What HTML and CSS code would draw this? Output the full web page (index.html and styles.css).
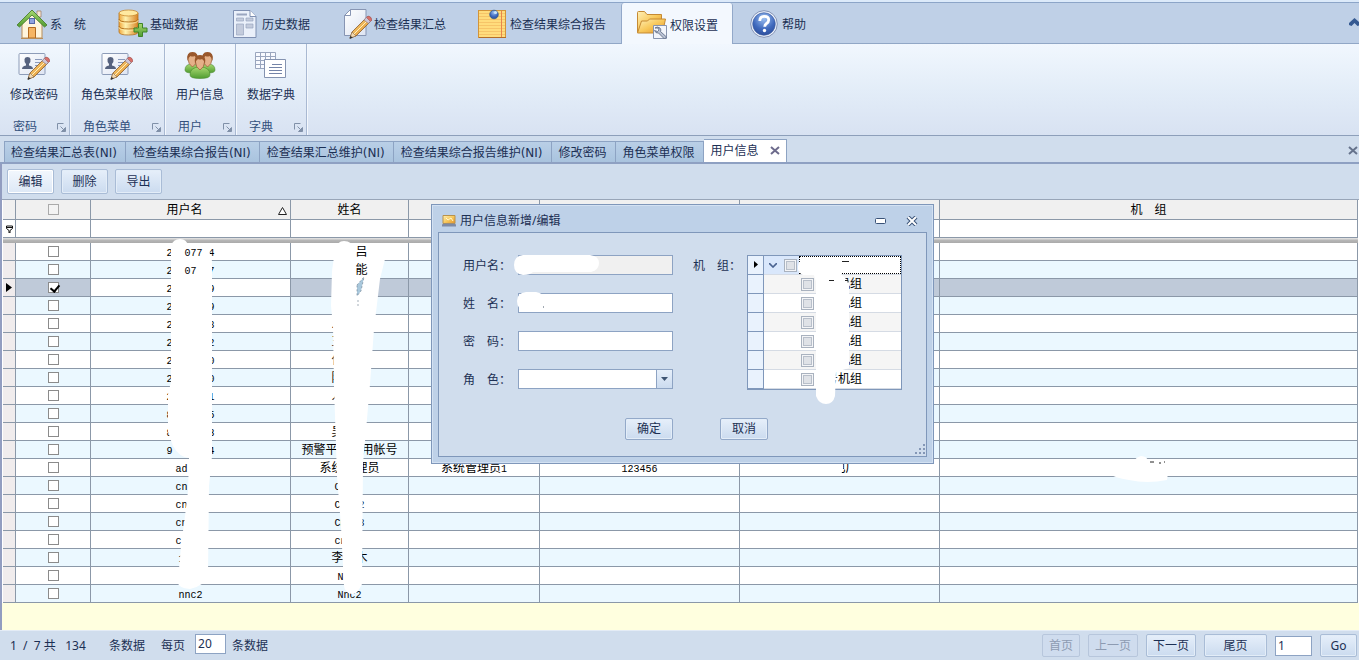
FILE: index.html
```html
<!DOCTYPE html>
<html lang="zh-CN">
<head>
<meta charset="utf-8">
<title>用户信息</title>
<link rel="stylesheet" href="styles.css">
</head>
<body>
<svg class="defs" width="0" height="0" aria-hidden="true">
  <defs>
    <linearGradient id="gold" x1="0" y1="0" x2="1" y2="1"><stop offset="0" stop-color="#fff0b8"/><stop offset=".5" stop-color="#f8c95c"/><stop offset="1" stop-color="#e2922a"/></linearGradient>
    <linearGradient id="cyl" x1="0" x2="1"><stop offset="0" stop-color="#f0a63c"/><stop offset=".35" stop-color="#fff3b0"/><stop offset="1" stop-color="#d98325"/></linearGradient>
    <linearGradient id="wood" x1="0" y1="0" x2="1" y2="1"><stop offset="0" stop-color="#ffdf8c"/><stop offset="1" stop-color="#d9851f"/></linearGradient>
    <radialGradient id="ball" cx=".5" cy=".25" r=".8"><stop offset="0" stop-color="#9cc0f2"/><stop offset=".6" stop-color="#3f69bd"/><stop offset="1" stop-color="#2a4a96"/></radialGradient>
    <linearGradient id="green" x1="0" y1="0" x2="0" y2="1"><stop offset="0" stop-color="#a8d870"/><stop offset="1" stop-color="#4f9c30"/></linearGradient>
    <linearGradient id="paper" x1="0" y1="0" x2="1" y2="1"><stop offset="0" stop-color="#ffffff"/><stop offset="1" stop-color="#dde4f2"/></linearGradient>
    <g id="pencil">
      <path d="M10 27l2-6L26 7l4 4-14 14z" fill="url(#wood)" stroke="#8a5a28" stroke-width=".8"/>
      <path d="M14 23L28 9" stroke="#fff0bd" stroke-width="1"/>
      <path d="M24 9l2-2.500 1-1 4 4-2.500 3z" fill="#cfc6d6" stroke="#7a6a80" stroke-width=".5"/>
      <path d="M26.500 6.500l1.500-1.500q3 0 4 4l-1.500 1.500z" fill="#d9706a" stroke="#8f4440" stroke-width=".5"/>
      <path d="M10 27l2-6 4 4z" fill="#f1d8b0" stroke="#7a5a3a" stroke-width=".5"/>
      <path d="M9.500 28l1-3.200 2.300 2z" fill="#333"/>
    </g>
    <g id="idcard">
      <rect x="1" y="2.500" width="26" height="21" rx="1" fill="url(#paper)" stroke="#8d9cb8"/>
      <path d="M4 18q0-3 4-3.500v-1.500q-2-2-1.500-5 .5-2 3-2t3 2q.5 3-1.500 5v1.500q4 .5 4 3.500z" fill="#56627e"/>
      <path d="M17 8.500h7M17 11.500h7M17 14.500h4" stroke="#8b9abb" stroke-width="1"/>
    </g>
    <g id="launcher" fill="none" stroke="#8090a8"><path d="M.5 6.500v-6h6"/><path d="M3.500 3.500l4 4M8.500 4.500v4h-4z" fill="#8090a8"/></g>
    <g id="head"><path d="M0 0q-1-6 4.500-6T9 0q0 5-4.500 8Q0 5 0 0z" fill="#e5b088" stroke="#8a4a24" stroke-width=".6"/><path d="M-.5 2q-1.500-9 5-9t5 9q-1-4-3-5-2 1-4 0-2 1-3 5z" fill="#99572c"/></g>
  </defs>
</svg>

<nav class="menu">
  <button class="menu-item"><svg width="32" height="32" viewBox="0 0 32 32"><path d="M21 3h4v6h-4z" fill="#f7e6d4" stroke="#9b7a60" stroke-width=".7"/><path d="M6 16L16 6l10 10v14H6z" fill="#fff5dd" stroke="#b98d58"/><path d="M1 17L16 2l15 15-2.500 2L16 7 3.500 19z" fill="url(#green)" stroke="#4c7f31" stroke-width=".9"/><rect x="13.500" y="10.500" width="5" height="5" fill="#8fa4e0" stroke="#5567a8"/><path d="M12.500 30V19.500h7V30z" fill="#f6b563" stroke="#b26a20"/><path d="M5 30.500h22" stroke="#b98d58"/></svg><span>系　统</span></button>
  <button class="menu-item"><svg width="32" height="32" viewBox="0 0 32 32"><path d="M3 5v19q0 3 9.500 3t9.500-3V5z" fill="url(#cyl)" stroke="#b6741f" stroke-width=".8"/><path d="M3 11q0 3 9.500 3t9.500-3M3 18q0 3 9.500 3t9.500-3" fill="none" stroke="#b6741f"/><path d="M3 12.300q0 3 9.500 3t9.500-3M3 19.300q0 3 9.500 3t9.500-3" fill="none" stroke="#fff0b0" stroke-width=".8"/><ellipse cx="12.500" cy="5" rx="9.500" ry="3" fill="#ffe9a0" stroke="#c98a30" stroke-width=".8"/><path d="M22.500 15.500h4v4.500h4.500v4h-4.500v4.500h-4V24H18v-4h4.500z" fill="url(#green)" stroke="#3f8428"/></svg><span>基础数据</span></button>
  <button class="menu-item"><svg width="32" height="32" viewBox="0 0 32 32"><path d="M5.500 2.500H22l6 6v21H5.500z" fill="#eaf0fa" stroke="#7f90b2"/><path d="M22 2.500v6h6" fill="#fff" stroke="#7f90b2"/><path d="M8.500 5.500H19v2H8.500z" fill="#9aa6c0"/><path d="M8.500 10h7v3h-7zM18 10h7v3h-7zM8.500 16h7v11h-7zM18 16h7v4h-7z" fill="#c3cbdc" stroke="#9aa6c0" stroke-width=".7"/></svg><span>历史数据</span></button>
  <button class="menu-item"><svg width="32" height="32" viewBox="0 0 32 32"><path d="M10.500 1.500H26v26H4.500v-20z" fill="url(#paper)" stroke="#8795b3"/><path d="M4.500 7.500h6v-6z" fill="#fff" stroke="#8795b3"/><use href="#pencil" y="3"/></svg><span>检查结果汇总</span></button>
  <button class="menu-item"><svg width="32" height="32" viewBox="0 0 32 32"><rect x="2.500" y="2.500" width="27" height="27" fill="#ffdc7c" stroke="#d39438"/><path d="M3 5.500h26M3 8.500h26M3 11.500h26M3 14.500h26M3 17.500h26M3 20.500h26M3 23.500h26M3 26.500h26" stroke="#f6c468"/><path d="M25.500 3v26" stroke="#e8854c"/><path d="M3 29.500h27" stroke="#b36d28"/><circle cx="18" cy="6.500" r="4.300" fill="url(#ball)" stroke="#2d588a" stroke-width=".7"/><circle cx="19.500" cy="4.500" r="1.600" fill="#c8e4fa"/></svg><span>检查结果综合报告</span></button>
  <button class="menu-item active"><svg width="32" height="32" viewBox="0 0 32 32"><path d="M1.500 24V4.500q0-1 1-1h6l2.500 3h14.500v17z" fill="url(#gold)" stroke="#c58a34"/><path d="M1.500 25l4-12h6l2-2h16l-3 14z" fill="url(#gold)" stroke="#c58a34"/><path d="M17.500 17.500h13v13h-13z" fill="#f2f5fb" stroke="#8794ae"/><path d="M19 20q2-2 5 0 1.500 2 .5 3.500l6 5.500-2 2-6-6q-3 .5-4-2.500l3 1 1.500-1.500-1-2z" fill="#b9c2d4" stroke="#58647e" stroke-width=".8"/></svg><span>权限设置</span></button>
  <button class="menu-item"><svg width="32" height="32" viewBox="0 0 32 32"><circle cx="16" cy="16" r="13.300" fill="#eef3fb" stroke="#8292b5"/><circle cx="16" cy="16" r="11.300" fill="url(#ball)" stroke="#3b5a9e" stroke-width=".6"/><path d="M11.800 13q0-4.700 4.500-4.700 4.400 0 4.400 3.700 0 2-2.200 3.500-1.800 1.200-1.800 3.200" fill="none" stroke="#fff" stroke-width="2.800"/><circle cx="16.500" cy="22.500" r="1.700" fill="#fff"/></svg><span>帮助</span></button>
  <button class="menu-collapse" aria-label="折叠"><svg width="11" height="9" viewBox="0 0 11 9"><path d="M0 7V5L5.500 0 11 5v2L8.500 8 5.500 5 2.500 8z" fill="#365a92"/></svg></button>
</nav>

<section class="ribbon">
  <div class="group">
    <button class="tool"><svg width="32" height="32" viewBox="0 0 32 32"><use href="#idcard"/><use href="#pencil" y="1"/></svg><span>修改密码</span></button>
    <div class="caption"><span>密码</span><svg width="9" height="9"><use href="#launcher"/></svg></div>
  </div>
  <div class="group">
    <button class="tool"><svg width="32" height="32" viewBox="0 0 32 32"><use href="#idcard"/><use href="#pencil" y="1"/></svg><span>角色菜单权限</span></button>
    <div class="caption"><span>角色菜单</span><svg width="9" height="9"><use href="#launcher"/></svg></div>
  </div>
  <div class="group">
    <button class="tool"><svg width="32" height="32" viewBox="0 0 32 32"><path d="M1 19q0-6 7-6t7 6q0 3-7 3t-7-3zM17 19q0-6 7-6t7 6q0 3-7 3t-7-3z" fill="url(#green)" stroke="#4a8a2e" stroke-width=".6"/><use href="#head" x="4" y="8"/><use href="#head" x="19" y="8"/><path d="M6 24q0-8 10-8t10 8q0 3.500-10 3.500T6 24z" fill="url(#green)" stroke="#4a8a2e" stroke-width=".6"/><use href="#head" x="11.500" y="11"/></svg><span>用户信息</span></button>
    <div class="caption"><span>用户</span><svg width="9" height="9"><use href="#launcher"/></svg></div>
  </div>
  <div class="group">
    <button class="tool"><svg width="32" height="32" viewBox="0 0 32 32"><path d="M.5 1.500h20v16H.500zM.500 5.500h20M.5 9.500h20M.5 13.500h20M5.500 1.500v16M10.500 1.500v16M15.500 1.500v16" fill="#f8faff" stroke="#9aa6be"/><path d="M9.500 8.500h21v18h-21z" fill="#fff" stroke="#8493b0"/><path d="M17 13.500h10M14 16.500h13M14 19.500h13M14 22.500h13" stroke="#7484a8"/></svg><span>数据字典</span></button>
    <div class="caption"><span>字典</span><svg width="9" height="9"><use href="#launcher"/></svg></div>
  </div>
</section>

<nav class="tabs">
  <button class="tab">检查结果汇总表(NI)</button>
  <button class="tab">检查结果综合报告(NI)</button>
  <button class="tab">检查结果汇总维护(NI)</button>
  <button class="tab">检查结果综合报告维护(NI)</button>
  <button class="tab">修改密码</button>
  <button class="tab">角色菜单权限</button>
  <button class="tab current">用户信息<svg width="10" height="9" viewBox="0 0 10 9"><path d="M1 1l8 7M9 1L1 8" stroke="#6d6b8c" stroke-width="2"/></svg></button>
  <button class="tabs-close" aria-label="关闭"><svg width="10" height="9" viewBox="0 0 10 9"><path d="M1 1l8 7M9 1L1 8" stroke="#66738c" stroke-width="2"/></svg></button>
</nav>

<main class="page">
  <div class="toolbar">
    <button class="btn focus">编辑</button>
    <button class="btn">删除</button>
    <button class="btn">导出</button>
  </div>

  <div class="grid">
    <table>
      <colgroup><col class="c-ind"><col class="c-chk"><col class="c-user"><col class="c-name"><col class="c-role"><col class="c-pwd"><col class="c-org"><col></colgroup>
      <thead>
        <tr class="head"><th></th><th><input type="checkbox" aria-label="全选"></th><th class="sorted">用户名<svg width="9" height="8" viewBox="0 0 9 8"><path d="M4.500 .5L8.500 7.500H.5z" fill="#fff" stroke="#222"/></svg></th><th>姓名</th><th></th><th></th><th></th><th>机　组</th></tr>
        <tr class="filter"><td><svg width="7" height="8" viewBox="0 0 7 8"><path d="M.500 1h6v2.500L4 5.500V8H3V5.500L.500 3.500z" fill="none" stroke="#111"/><path d="M1 2.500h5" stroke="#111"/></svg></td><td></td><td></td><td></td><td></td><td></td><td></td><td></td></tr>
        <tr class="band"><td colspan="8"></td></tr>
      </thead>
      <tbody>
        <tr><td></td><td><input type="checkbox" aria-label="选择"></td><td><kbd>2  <span class="over">077</span> 4</kbd></td><td>　　<span class="over">吕</span></td><td></td><td></td><td></td><td></td></tr>
        <tr><td></td><td><input type="checkbox" aria-label="选择"></td><td><kbd>2  <span class="over">07</span>  7</kbd></td><td>　　<span class="over">能</span></td><td></td><td></td><td></td><td></td></tr>
        <tr class="selected"><td><svg width="6" height="9" viewBox="0 0 6 9"><path d="M0 0l6 4.500L0 9z"/></svg></td><td><input type="checkbox" checked aria-label="选择"></td><td class="edit"><kbd>2      9</kbd></td><td></td><td></td><td></td><td></td><td></td></tr>
        <tr><td></td><td><input type="checkbox" aria-label="选择"></td><td><kbd>2      9</kbd></td><td></td><td></td><td></td><td></td><td></td></tr>
        <tr><td></td><td><input type="checkbox" aria-label="选择"></td><td><kbd>2      8</kbd></td><td>人　　</td><td></td><td></td><td></td><td></td></tr>
        <tr><td></td><td><input type="checkbox" aria-label="选择"></td><td><kbd>2      2</kbd></td><td>王　　</td><td></td><td></td><td></td><td></td></tr>
        <tr><td></td><td><input type="checkbox" aria-label="选择"></td><td><kbd>2      0</kbd></td><td>付　　</td><td></td><td></td><td></td><td></td></tr>
        <tr><td></td><td><input type="checkbox" aria-label="选择"></td><td><kbd>2      0</kbd></td><td>陈　　</td><td></td><td></td><td></td><td></td></tr>
        <tr><td></td><td><input type="checkbox" aria-label="选择"></td><td><kbd>2      1</kbd></td><td>人　　</td><td></td><td></td><td></td><td></td></tr>
        <tr><td></td><td><input type="checkbox" aria-label="选择"></td><td><kbd>8      5</kbd></td><td></td><td></td><td></td><td></td><td></td></tr>
        <tr><td></td><td><input type="checkbox" aria-label="选择"></td><td><kbd>8      3</kbd></td><td>吴　　</td><td></td><td></td><td></td><td></td></tr>
        <tr><td></td><td><input type="checkbox" aria-label="选择"></td><td><kbd>9      4</kbd></td><td>预警平　　用帐号</td><td></td><td></td><td></td><td></td></tr>
        <tr><td></td><td><input type="checkbox" aria-label="选择"></td><td><kbd>ad   </kbd></td><td>系统　理员</td><td>系统管理员<kbd>1</kbd></td><td><kbd>123456</kbd></td><td class="marked">　电厂<svg class="blot" width="46" height="22" viewBox="0 0 46 22"><path d="M1 7Q4 0 12 1l28 5q5 1 4 8-1 8-10 7l-14-2Q6 14 1 7z" fill="#fff"/></svg></td><td class="marked"><svg class="blot" width="64" height="28" viewBox="0 0 64 28"><path d="M0 18l26-9Q28 2 34 1q6 0 8 6l20 4-2 14q-20 4-38 0Q8 23 0 18z" fill="#fff"/><path d="M43 7h4M52 8h2M57 7h1" stroke="#222" stroke-width="1"/></svg></td></tr>
        <tr><td></td><td><input type="checkbox" aria-label="选择"></td><td><kbd>cn   </kbd></td><td><kbd>C    </kbd></td><td></td><td></td><td></td><td></td></tr>
        <tr><td></td><td><input type="checkbox" aria-label="选择"></td><td><kbd>cn   </kbd></td><td><kbd>CN  2</kbd></td><td></td><td></td><td></td><td></td></tr>
        <tr><td></td><td><input type="checkbox" aria-label="选择"></td><td><kbd>cn   </kbd></td><td><kbd>CN  3</kbd></td><td></td><td></td><td></td><td></td></tr>
        <tr><td></td><td><input type="checkbox" aria-label="选择"></td><td><kbd>c    </kbd></td><td><kbd>cn   </kbd></td><td></td><td></td><td></td><td></td></tr>
        <tr><td></td><td><input type="checkbox" aria-label="选择"></td><td><kbd>1   </kbd></td><td>李　木</td><td></td><td></td><td></td><td></td></tr>
        <tr><td></td><td><input type="checkbox" aria-label="选择"></td><td></td><td><kbd>N   </kbd></td><td></td><td></td><td></td><td></td></tr>
        <tr><td></td><td><input type="checkbox" aria-label="选择"></td><td><kbd>nnc2</kbd></td><td><kbd>Nnc2</kbd></td><td></td><td></td><td></td><td></td></tr>
      </tbody>
    </table>
    <svg class="scribble" width="420" height="403" viewBox="0 200 420 403" aria-hidden="true">
      <path d="M171 246Q173 239 180 239t8 7l10 4 10-3 4 14v195l-3 30-1 90q-4 10-18 13-13-1-12-8l3-35 4-30 3-25 1-33q-10-1-16-12l-5-14v-38l3-12z" fill="#fff"/>
      <path d="M335 250q2-9 9-9 8 0 10 8l10 2q14 4 21 8l-5 20-6 50-4 55-3 35-4 45-1 120q-5 11-10 10-7-1-8-8l-3-60-4-50-1-30-2-60-1-60-2-20 1-35z" fill="#fff"/>
      <path d="M357 285l7-8-3 14-4 5zM358 300v6" fill="#a9c8dc" stroke="#68788a" stroke-width=".6" stroke-dasharray="2 2"/>
    </svg>
  </div>
  <div class="rest"></div>

  <section class="dialog" role="dialog" aria-label="用户信息新增/编辑">
    <header class="dialog-title">
      <svg width="16" height="14" viewBox="0 0 16 14"><path d="M2 1.500h12v8H2z" fill="url(#gold)" stroke="#b9924c"/><path d="M1 10.500l2-1h10l2 1v2H1z" fill="#7d8aa5"/><path d="M5 4l2 2 3-2 2 3" stroke="#fff6cf" fill="none"/></svg>
      <h2>用户信息新增/编辑</h2>
      <button aria-label="最小化"><svg width="11" height="6" viewBox="0 0 11 6"><rect x=".5" y=".5" width="10" height="5" rx="1" fill="#fff" stroke="#3a5378"/></svg></button>
      <button aria-label="关闭"><svg width="12" height="10" viewBox="0 0 12 10"><path d="M2 1l8 8M10 1L2 9" stroke="#3a5378" stroke-width="4"/><path d="M2 1l8 8M10 1L2 9" stroke="#fff" stroke-width="2"/></svg></button>
    </header>
    <form class="dialog-body">
      <div class="fields">
        <label for="f-user">用户名：</label><input id="f-user" type="text" readonly>
        <label for="f-name">姓　名：</label><input id="f-name" type="text">
        <label for="f-pwd">密　码：</label><input id="f-pwd" type="password">
        <label for="f-role">角　色：</label><span class="combo"><select id="f-role"><option></option></select><span class="arrow"><svg width="7" height="4" viewBox="0 0 7 4"><path d="M0 0h7L3.500 4z" fill="#3f5573"/></svg></span></span>
        <svg class="field-blot" width="90" height="62" viewBox="0 0 90 62" aria-hidden="true"><path d="M10 3h67q9 1 9 8t-8 9H20q-3 3-10 3-9-1-9-10T10 3z" fill="#fff"/><path d="M13 40h10q8 1 9 8-2 8-10 9-3 3-10 2-8-2-8-10t9-9z" fill="#fff"/><path d="M30 55h1" stroke="#456"/></svg>
      </div>
      <div class="units">
        <span>机　组：</span>
        <div class="tree">
          <div class="node root"><i><svg width="4" height="7" viewBox="0 0 4 7"><path d="M0 0l4 3.500L0 7z"/></svg></i><svg width="8" height="5" viewBox="0 0 8 5"><path d="M0 0l4 4 4-4" fill="none" stroke="#4a6390" stroke-width="1.600"/></svg><input type="checkbox" aria-label="全部"><span class="focus-cell"></span></div>
          <div class="node"><i></i><label><input type="checkbox">　　机组</label></div>
          <div class="node"><i></i><label><input type="checkbox">　　机组</label></div>
          <div class="node"><i></i><label><input type="checkbox">　　机组</label></div>
          <div class="node"><i></i><label><input type="checkbox">　　机组</label></div>
          <div class="node"><i></i><label><input type="checkbox">　　机组</label></div>
          <div class="node"><i></i><label><input type="checkbox">　号机组</label></div>
          <svg class="tree-blot" width="60" height="150" viewBox="0 0 60 150" aria-hidden="true"><path d="M0 11q1-7 8-8l35 2 0 14 8 8v86l-13 4-1 24q-2 8-9 8t-10-8V27l-2-7-11 0q-6-3-5-9z" fill="#fff"/><path d="M44 6.500h7M31 25.500h5M47 25.500h3v2" stroke="#222" fill="none"/></svg>
        </div>
      </div>
      <div class="actions"><button type="button" class="btn">确定</button><button type="button" class="btn">取消</button></div>
      <svg class="grip" width="12" height="12" viewBox="0 0 12 12"><path d="M9 0h2v2H9zM9 4h2v2H9zM9 8h2v2H9zM5 4h2v2H5zM5 8h2v2H5zM1 8h2v2H1z" fill="#8497b6"/></svg>
    </form>
  </section>
</main>

<footer class="pager">
  <span class="count">1&nbsp; /&nbsp; 7 共&nbsp;&nbsp; 134</span>
  <span>条数据</span>
  <label class="size">每页 <input type="text" value="20"></label>
  <span class="unit">条数据</span>
  <div class="pages">
    <button class="btn" disabled>首页</button>
    <button class="btn" disabled>上一页</button>
    <button class="btn">下一页</button>
    <button class="btn wide">尾页</button>
    <input type="text" value="1" aria-label="页码">
    <button class="btn">Go</button>
  </div>
</footer>
</body>
</html>
```
FILE: styles.css
```css
* { box-sizing: border-box; }

body {
  margin: 0;
  min-height: 100vh;
  display: flex;
  flex-direction: column;
  background: #d0dded;
  color: #1c3054;
  font: 12px/18px "Noto Sans", "Noto Sans CJK SC", sans-serif;
}

button, input, select {
  font: inherit;
  color: inherit;
  margin: 0;
  border-radius: 0;
}

button { padding: 0; border: 0; background: none; white-space: nowrap; }
svg { display: block; flex: none; }
.defs { position: absolute; }

/* Main menu */
.menu {
  display: flex;
  height: 44px;
  padding-left: 1px;
  border-top: 2px solid #dceafa;
  border-bottom: 1px solid #91a7c6;
  background: #bfd0e7;
  box-shadow: inset 0 1px #8ca5c8;
}

.menu-item {
  display: flex;
  align-items: center;
  gap: 2px;
  height: 41px;
  margin: 1px 0 0;
  padding: 0 14px;
  border: 1px solid transparent;
  border-width: 0 1px;
}

.menu-item span { padding-top: 3px; }

.menu-item.active {
  height: 42px;
  background: #f3f8fe;
  border-color: #92a8c9;
  border-radius: 3px 3px 0 0;
}

.menu-collapse { margin-left: auto; width: 10px; overflow: hidden; }

/* Ribbon */
.ribbon {
  display: flex;
  height: 92px;
  border-bottom: 1px solid #8d9fba;
  background: linear-gradient(#f1f7fe, #e3edf8 50%, #d8e2f2);
}

.group {
  display: flex;
  flex-direction: column;
  justify-content: space-between;
  padding-top: 7px;
  border-right: 1px solid #a9b9d2;
  box-shadow: 1px 0 #f4f8fd;
}

.tool {
  display: flex;
  flex-direction: column;
  align-items: center;
  gap: 3px;
  padding: 0 11px;
}

.group:first-child .tool { padding-left: 10px; }

.caption {
  display: flex;
  align-items: center;
  justify-content: space-between;
  height: 16px;
  padding: 0 3px 0 13px;
  color: #33507c;
}

/* Document tabs */
.tabs {
  display: flex;
  align-items: flex-end;
  height: 28px;
  padding-left: 4px;
  border-bottom: 2px solid #8ea0c2;
  background: #d0dded;
}

.tab {
  height: 21px;
  padding: 0 8px 0 7px;
  border: 1px solid #8da3c3;
  border-width: 1px 1px 0 0;
  background: linear-gradient(#b9cfe7, #a9c3de);
  font-family: "DejaVu Sans", "Noto Sans CJK SC", sans-serif;
  line-height: 22px;
}

.tab:first-child { padding-left: 6px; border-left-width: 1px; }

.tab.current {
  display: flex;
  align-items: center;
  gap: 11px;
  height: 23px;
  padding-right: 6px;
  background: #fff;
}

.tab.current svg { margin-bottom: 2px; }
.tabs-close { margin: 0 1px 7px auto; }

/* Page */
.page {
  position: relative;
  flex: 1;
  display: flex;
  flex-direction: column;
  border-left: 2px solid #929dc0;
}

.toolbar {
  display: flex;
  gap: 7px;
  height: 36px;
  padding: 5px 5px;
  border-bottom: 1px solid #98a5b8;
  background: #d0dded;
}

.btn {
  height: 25px;
  min-width: 47px;
  border: 1px solid #a9bcd6;
  border-radius: 2px;
  background: linear-gradient(#e6effa, #cbdbef);
  box-shadow: inset 0 0 0 1px #e3edf8;
  line-height: 23px;
}

.btn.focus { background: linear-gradient(#f2f7fd, #dde8f6); box-shadow: inset 0 0 0 1px #fff; }
.btn:disabled { color: #8d9bb2; background: #cfdcee; border-color: #b7c6dc; box-shadow: none; }

/* Data grid */
.grid { position: relative; padding: 0 1px; background: #fff; }

.grid table {
  width: 100%;
  table-layout: fixed;
  border-collapse: separate;
  border-spacing: 0;
  color: #000;
}

.c-ind { width: 13px; }
.c-chk { width: 75px; }
.c-user, .c-pwd, .c-org { width: 200px; }
.c-name { width: 118px; }
.c-role { width: 131px; }

.grid th, .grid td {
  height: 18px;
  padding: 0;
  border-right: 1px solid #8b98a8;
  border-bottom: 1px solid #8b98a8;
  font-weight: 400;
  line-height: 15px;
  text-align: center;
  white-space: pre;
}

.grid .head th { position: relative; height: 20px; background: #f0f0f0; }
.grid .head .sorted { padding-right: 12px; }
.sorted svg { position: absolute; right: 3px; top: 7px; }

.grid .band td {
  height: 5px;
  border: 0;
  background: linear-gradient(#e8e8e8, #b5b5b5 50%, #aaa);
}

.grid tbody tr:nth-child(even) { background: #ebf8ff; }
.grid tbody td:first-child { background: #f0eced; }
.grid tbody tr.selected { background: #bfcad9; }
.grid tbody tr.selected .edit { background: #fff; }
.grid td:first-child svg { margin: 0 auto; }

.grid kbd { font: 10px/10px "Liberation Mono", monospace; }
.over { position: relative; z-index: 2; }

.grid input {
  display: block;
  appearance: none;
  width: 11px;
  height: 11px;
  margin: 0 auto;
  border: 1px solid #8b8b8b;
  background: #fff;
}

.grid .head input { background: #f3f3f3; border-color: #aaa; }

.grid input:checked::after {
  content: "";
  display: block;
  width: 4px;
  height: 7px;
  margin-left: 3px;
  border: solid #000;
  border-width: 0 2px 2px 0;
  transform: rotate(40deg);
}

.marked { position: relative; }
.blot { position: absolute; top: -4px; left: 59px; }
.marked:last-child .blot { left: 40%; }
.scribble { position: absolute; left: -2px; top: 0; pointer-events: none; }
.rest { flex: 1; min-height: 20px; background: #ffffdf; }

/* Dialog */
.dialog {
  position: absolute;
  left: 429px;
  top: 40px;
  z-index: 5;
  width: 503px;
  padding: 0 6px 6px;
  border: 1px solid #7f97ba;
  background: #bed1e8;
  box-shadow: inset 0 0 0 1px #d3e1f2;
}

.dialog-title {
  display: flex;
  align-items: center;
  gap: 20px;
  height: 27px;
  padding: 5px 9px 0 3px;
}

.dialog-title h2 {
  flex: 1;
  margin: 0 0 0 -17px;
  font-size: 12px;
  font-weight: 400;
}

.dialog-body {
  position: relative;
  display: grid;
  grid-template-columns: 210px 1fr;
  column-gap: 20px;
  row-gap: 28px;
  padding: 22px 24px 16px;
  border: 1px solid #7f97ba;
  background: #d0dded;
}

.fields {
  position: relative;
  display: grid;
  grid-template-columns: 55px 155px;
  grid-auto-rows: 20px;
  row-gap: 18px;
  line-height: 22px;
  white-space: nowrap;
}

.fields input, .fields select, .pager input {
  width: 100%;
  height: 20px;
  padding: 0 2px;
  border: 1px solid #8da3c3;
  background: #fff;
}

.fields input:read-only { background: #f0f0f0; }
.field-blot { position: absolute; left: 50px; top: -3px; pointer-events: none; }

.combo { position: relative; }
.combo select { display: block; appearance: none; }

.arrow {
  position: absolute;
  right: 0;
  top: 0;
  display: grid;
  place-items: center;
  width: 17px;
  height: 20px;
  border: 1px solid #8da3c3;
  background: linear-gradient(#e6effa, #cbdbef);
  pointer-events: none;
}

.units { display: flex; line-height: 22px; white-space: nowrap; }
.units > span { width: 54px; flex: none; }

.tree {
  position: relative;
  width: 155px;
  height: 135px;
  border: 1px solid #7f97ba;
  background: #fff;
  color: #000;
}

.node {
  display: flex;
  align-items: center;
  height: 19px;
  border-bottom: 1px solid #d5dbe4;
}

.node:nth-child(even) { background: #f5f5f5; }

.node i {
  display: grid;
  place-items: center;
  width: 16px;
  height: 19px;
  border-right: 1px solid #7f97ba;
  border-bottom: 1px solid #7f97ba;
  background: #e9f2fd;
}

.node label { display: flex; align-items: center; padding-left: 37px; }

.tree input {
  appearance: none;
  width: 13px;
  height: 13px;
  border: 1px solid #a9b2bf;
  background: #dfe2e7;
  box-shadow: inset 0 0 0 1px #f4f5f7, inset 0 0 0 2px #b8bfca;
}

.root { gap: 7px; background: #d9e7fb; }
.root i { margin-right: -2px; }
.focus-cell { flex: 1; height: 18px; margin-left: -5px; border: 1px dotted #000; background: #fff; }
.tree-blot { position: absolute; left: 50px; top: -1px; pointer-events: none; }

.actions { grid-column: 1 / -1; display: flex; gap: 47px; padding-left: 162px; }
.actions .btn { width: 48px; height: 22px; line-height: 20px; border-color: #93a9c9; }
.grip { position: absolute; right: 0; bottom: 0; }

/* Pager */
.pager {
  display: flex;
  align-items: center;
  height: 30px;
  padding: 0 2px 0 10px;
  border-top: 1px solid #e4ecf6;
  background: #d0dded;
}

.count { width: 99px; white-space: nowrap; }
.size { display: flex; align-items: center; gap: 10px; margin: 0 6px 0 16px; }
.pager .size input { width: 31px; margin-bottom: 4px; }
.pages { display: flex; align-items: center; gap: 8px; margin-left: auto; }
.pages .btn { min-width: 37px; height: 23px; padding: 0 6px; line-height: 21px; }
.pages .wide { width: 63px; }
.pages input { width: 37px; }
```
